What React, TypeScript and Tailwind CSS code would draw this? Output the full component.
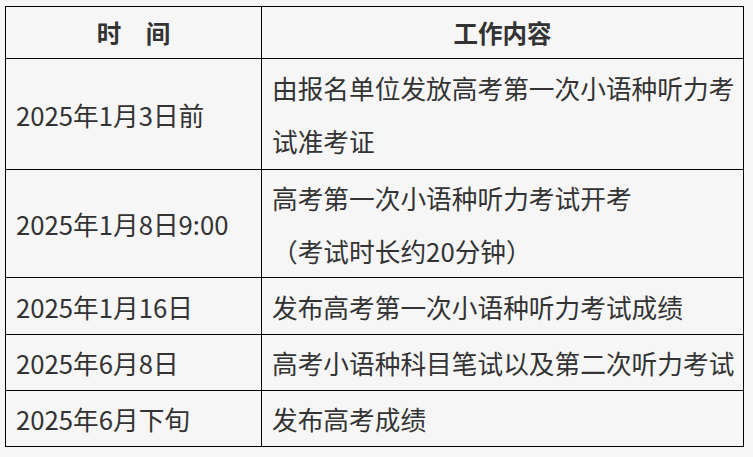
import React from "react";

const rows: { time: string; lines: string[]; h: string }[] = [
  { time: "2025年1月3日前", lines: ["由报名单位发放高考第一次小语种听力考", "试准考证"], h: "h-[111px]" },
  { time: "2025年1月8日9:00", lines: ["高考第一次小语种听力考试开考", "（考试时长约20分钟）"], h: "h-[108px]" },
  { time: "2025年1月16日", lines: ["发布高考第一次小语种听力考试成绩"], h: "h-[57px]" },
  { time: "2025年6月8日", lines: ["高考小语种科目笔试以及第二次听力考试"], h: "h-[56px]" },
  { time: "2025年6月下旬", lines: ["发布高考成绩"], h: "h-[56px]" },
];

export default function App() {
  return (
    <div
      className="w-[753px] h-[457px] bg-[#f6f6f6] pt-[6px] pl-[5px] text-[#333333]"
      style={{ fontFamily: '"Noto Sans CJK SC", "Noto Sans", sans-serif' }}
    >
      <table className="w-[739px] table-fixed border-collapse text-[25.7px]">
        <colgroup>
          <col className="w-[256px]" />
          <col />
        </colgroup>
        <thead>
          <tr className="h-[52px]">
            <th className="border border-black font-bold text-center align-middle leading-[50px] text-[24.5px]">时　间</th>
            <th className="border border-black font-bold text-center align-middle leading-[50px] text-[24.5px]">工作内容</th>
          </tr>
        </thead>
        <tbody>
          {rows.map((r) => (
            <tr key={r.time} className={r.h}>
              <td className="border border-black pl-[10px] pr-0 py-0 align-middle leading-[53px] whitespace-nowrap">
                {r.time}
              </td>
              <td className="border border-black pl-[10px] pr-0 py-0 align-middle leading-[53px]">
                {r.lines.map((l) => (
                  <div key={l} className="whitespace-nowrap">
                    {l}
                  </div>
                ))}
              </td>
            </tr>
          ))}
        </tbody>
      </table>
    </div>
  );
}
